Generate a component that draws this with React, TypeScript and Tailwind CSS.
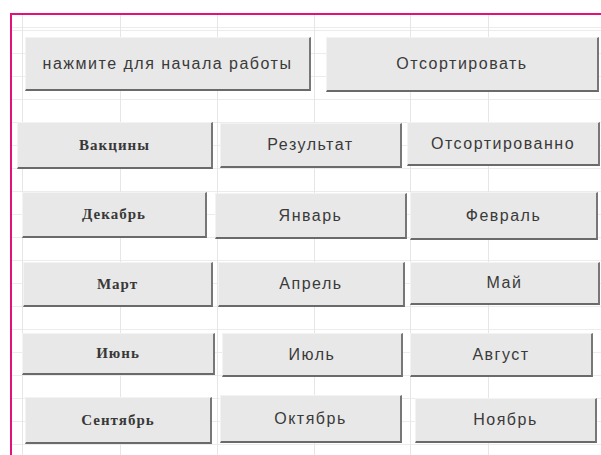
const sans = "font-['Liberation_Sans',Arial,sans-serif] text-[16px] tracking-[1.5px] text-[#3a3a3a]";
const serif = "font-['Liberation_Serif','Times_New_Roman',serif] font-bold text-[15px] tracking-[1px] text-[#383838]";

type Btn = { label: string; cls: string; serif?: boolean };

// form buttons laid on the sheet, one row per line of controls
const rows: { cls: string; items: Btn[] }[] = [
  {
    cls: "h-[85px]",
    items: [
      { label: "нажмите для начала работы", cls: "ml-[13px] w-[286px] h-[54px]" },
      { label: "Отсортировать", cls: "ml-[15px] w-[273px] h-[55px]" },
    ],
  },
  {
    cls: "h-[70px]",
    items: [
      { label: "Вакцины", cls: "ml-[5px] w-[196px] h-[47px]", serif: true },
      { label: "Результат", cls: "ml-[7px] mt-[1px] w-[182px] h-[45px]" },
      { label: "Отсортированно", cls: "ml-[5px] w-[193px] h-[44px]" },
    ],
  },
  {
    cls: "h-[70px]",
    items: [
      { label: "Декабрь", cls: "ml-[10px] w-[185px] h-[46px]", serif: true },
      { label: "Январь", cls: "ml-[8px] mt-[1px] w-[192px] h-[46px]" },
      { label: "Февраль", cls: "ml-[3px] w-[188px] h-[48px]" },
    ],
  },
  {
    cls: "h-[71px]",
    items: [
      { label: "Март", cls: "ml-[11px] w-[190px] h-[45px]", serif: true },
      { label: "Апрель", cls: "ml-[5px] w-[187px] h-[45px]" },
      { label: "Май", cls: "ml-[5px] w-[190px] h-[43px]" },
    ],
  },
  {
    cls: "h-[62px]",
    items: [
      { label: "Июнь", cls: "ml-[10px] w-[193px] h-[42px]", serif: true },
      { label: "Июль", cls: "ml-[7px] w-[181px] h-[44px]" },
      { label: "Август", cls: "ml-[7px] w-[183px] h-[44px]" },
    ],
  },
  {
    cls: "h-[60px]",
    items: [
      { label: "Сентябрь", cls: "ml-[13px] mt-[2px] w-[187px] h-[47px]", serif: true },
      { label: "Октябрь", cls: "ml-[8px] w-[182px] h-[48px]" },
      { label: "Ноябрь", cls: "ml-[13px] mt-[3px] w-[182px] h-[45px]" },
    ],
  },
];

// column widths between the vertical gridlines
const cols = ["w-[11px]", "w-[98px]", "w-[97px]", "w-[97px]", "w-[96px]", "w-[78px]"];

function SheetButton({ b }: { b: Btn }) {
  return (
    <div
      className={`${b.cls} shrink-0 flex items-center justify-center bg-[#e8e8e8] border-t border-l border-t-[#f3f3f3] border-l-[#f3f3f3] border-b-2 border-r-2 border-b-[#6a6a6a] border-r-[#777777] whitespace-nowrap ${b.serif ? serif : sans}`}
    >
      {b.label}
    </div>
  );
}

export default function App() {
  return (
    <div className="w-[601px] h-[455px] bg-white overflow-hidden pt-[13px] pl-[10px]">
      <div className="h-[442px] border-t-2 border-l-2 border-[#e2127c] overflow-hidden grid">
        {/* gridlines */}
        <div className="col-start-1 row-start-1 flex h-[440px] bg-[repeating-linear-gradient(180deg,#ececec_0_1px,transparent_1px_23px)] bg-[position:0_15px]">
          {cols.map((c, i) => (
            <div key={i} className={`${c} h-full border-r border-[#e6e6e6] shrink-0`} />
          ))}
        </div>

        {/* controls */}
        <div className="col-start-1 row-start-1 flex flex-col pt-[22px]">
          {rows.map((r, i) => (
            <div key={i} className={`${r.cls} flex items-start shrink-0`}>
              {r.items.map((b) => (
                <SheetButton key={b.label} b={b} />
              ))}
            </div>
          ))}
        </div>
      </div>
    </div>
  );
}
